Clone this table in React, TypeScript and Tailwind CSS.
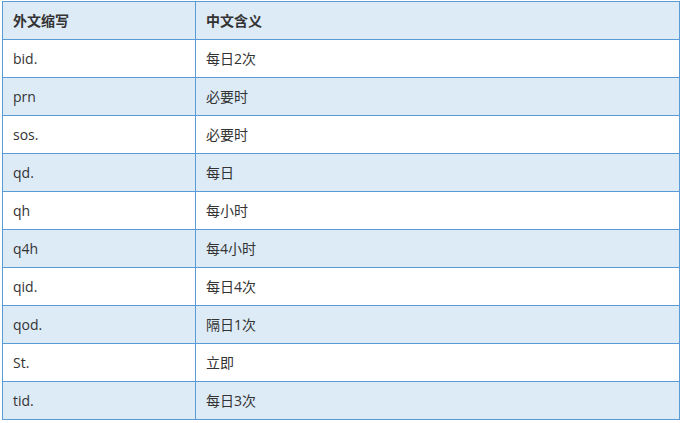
const rows = [
  ['bid.', '每日2次'],
  ['prn', '必要时'],
  ['sos.', '必要时'],
  ['qd.', '每日'],
  ['qh', '每小时'],
  ['q4h', '每4小时'],
  ['qid.', '每日4次'],
  ['qod.', '隔日1次'],
  ['St.', '立即'],
  ['tid.', '每日3次'],
]

export default function App() {
  return (
    <div className="w-[682px] h-[423px] bg-white pt-px pl-[2px] font-['Open_Sans','Noto_Sans_CJK_SC',sans-serif] text-[14px] text-[#333]">
      <table className="w-[678px] border-collapse table-fixed">
        <colgroup>
          <col className="w-[193px]" />
          <col />
        </colgroup>
        <thead>
          <tr className="h-[38px] bg-[#ddebf7]">
            <th className="border border-[#5b9bd5] px-[10px] text-left font-bold">外文缩写</th>
            <th className="border border-[#5b9bd5] px-[10px] text-left font-bold">中文含义</th>
          </tr>
        </thead>
        <tbody>
          {rows.map(([abbr, meaning], i) => (
            <tr key={abbr + i} className={i % 2 === 0 ? 'h-[38px] bg-white' : 'h-[38px] bg-[#ddebf7]'}>
              <td className="border border-[#5b9bd5] px-[10px]">{abbr}</td>
              <td className="border border-[#5b9bd5] px-[10px]">{meaning}</td>
            </tr>
          ))}
        </tbody>
      </table>
    </div>
  )
}
